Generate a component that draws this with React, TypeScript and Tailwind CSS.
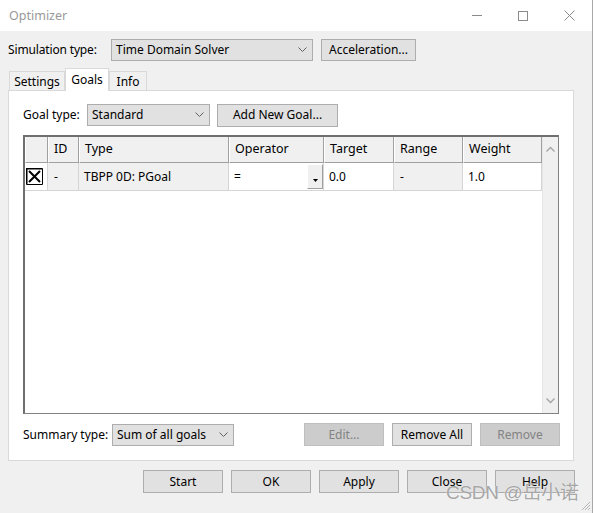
import React from "react";

const btn =
  "h-[23px] w-[80px] border border-[#adadad] bg-[#e1e1e1] flex items-center justify-center text-black";
const btnOff =
  "h-[23px] w-[80px] border border-[#bfbfbf] bg-[#cccccc] flex items-center justify-center text-[#838383]";

function Chevron() {
  return (
    <svg width="9" height="6" viewBox="0 0 9 6" className="shrink-0">
      <path d="M0.5 0.5 L4.5 4.5 L8.5 0.5" fill="none" stroke="#606060" strokeWidth="1" />
    </svg>
  );
}

function Combo({ label, width }: { label: string; width: string }) {
  return (
    <div
      className={`${width} h-[22px] border border-[#adadad] bg-[#e1e1e1] flex items-center justify-between pl-[4px] pr-[5px]`}
    >
      <span>{label}</span>
      <Chevron />
    </div>
  );
}

function CheckBox() {
  return (
    <svg width="17" height="17" viewBox="0 0 17 17">
      <rect x="0" y="0" width="17" height="17" fill="#fff" />
      <path d="M0.5 16.5 V0.5 H16.5" fill="none" stroke="#000" strokeWidth="2" />
      <path d="M16.5 0.5 V16.5 H0.5" fill="none" stroke="#000" strokeWidth="1" />
      <path d="M3 3 L14 14 M14 3 L3 14" stroke="#000" strokeWidth="2" />
    </svg>
  );
}

const headers = [
  { t: "", w: "w-[23px]" },
  { t: "ID", w: "w-[31px]" },
  { t: "Type", w: "w-[150px]" },
  { t: "Operator", w: "w-[95px]" },
  { t: "Target", w: "w-[70px]" },
  { t: "Range", w: "w-[69px]" },
  { t: "Weight", w: "w-[79px]" },
];

export default function App() {
  return (
    <div className="w-[593px] h-[513px] bg-[#f0f0f0] relative overflow-hidden font-['Noto_Sans',sans-serif] text-[12px] text-black flex flex-col border-r border-[#a8a8a8]">
      {/* title bar */}
      <div className="h-[31px] bg-white flex items-center shrink-0">
        <span className="pl-[9px] text-[#999999] text-[12.5px] pt-px">Optimizer</span>
        <div className="ml-auto flex h-full">
          <div className="w-[46px] flex items-center justify-center">
            <div className="w-[10px] h-px bg-[#8a8a8a]" />
          </div>
          <div className="w-[46px] flex items-center justify-center">
            <div className="w-[10px] h-[10px] border border-[#8a8a8a]" />
          </div>
          <div className="w-[46px] flex items-center justify-center">
            <svg width="11" height="11" viewBox="0 0 11 11">
              <path d="M0.5 0.5 L10.5 10.5 M10.5 0.5 L0.5 10.5" stroke="#8a8a8a" strokeWidth="1" />
            </svg>
          </div>
        </div>
      </div>

      {/* simulation row */}
      <div className="flex items-center mt-[8px] pl-[8px] h-[22px]">
        <span className="w-[103px] tracking-[-0.15px]">Simulation type:</span>
        <Combo label="Time Domain Solver" width="w-[202px]" />
        <div className="ml-[8px] h-[22px] w-[95px] border border-[#adadad] bg-[#e1e1e1] flex items-center justify-center">
          Acceleration...
        </div>
      </div>

      {/* tabs */}
      <div className="flex items-end pl-[9px] mt-[7px] h-[22px] relative z-10">
        <div className="w-[56px] h-[19px] border border-[#d9d9d9] border-b-0 flex items-center justify-center pt-px">
          Settings
        </div>
        <div className="w-[44px] h-[23px] border border-[#d9d9d9] border-b-0 bg-white flex items-start justify-center pt-[2px] -mb-px">
          Goals
        </div>
        <div className="w-[38px] h-[19px] border border-[#d9d9d9] border-b-0 flex items-center justify-center pt-px">
          Info
        </div>
      </div>

      {/* panel */}
      <div className="ml-[8px] w-[566px] h-[371px] bg-white border border-[#d9d9d9] flex flex-col pl-[14px]">
        <div className="flex items-center mt-[13px] h-[22px]">
          <span className="w-[64px]">Goal type:</span>
          <Combo label="Standard" width="w-[123px]" />
          <div className="ml-[7px] h-[23px] w-[121px] border border-[#adadad] bg-[#e1e1e1] flex items-center justify-center">
            Add New Goal...
          </div>
        </div>

        {/* grid */}
        <div className="mt-[9px] w-[536px] h-[279px] border border-[#828282] border-l-2 border-t-2 border-l-[#6f6f6f] border-t-[#6f6f6f] flex bg-white">
          <div className="flex flex-col">
            <div className="flex h-[26px]">
              {headers.map((h, i) => (
                <div
                  key={i}
                  className={`${h.w} h-full bg-[#f0f0f0] border-r border-b border-[#a0a0a0] border-l border-l-white flex items-center pl-[5px] text-[12.5px]`}
                >
                  {h.t}
                </div>
              ))}
            </div>
            <div className="flex h-[28px]">
              <div className="w-[23px] h-full bg-white border-r border-b border-[#d5d5d5] flex items-center pl-[1px]">
                <CheckBox />
              </div>
              <div className="w-[31px] h-full bg-[#f0f0f0] border-r border-b border-[#d5d5d5] flex items-center pl-[6px]">
                -
              </div>
              <div className="w-[150px] h-full bg-[#f0f0f0] border-r border-b border-[#d5d5d5] flex items-center pl-[5px]">
                TBPP 0D: PGoal
              </div>
              <div className="w-[95px] h-full bg-white border-r border-b border-[#d5d5d5] flex items-center pl-[5px] relative">
                =
                <div className="absolute right-0 top-[1px] w-[16px] h-[25px] bg-[#f0f0f0] border border-[#a0a0a0] border-l-white border-t-white flex items-end justify-center pb-[6px]">
                  <svg width="5" height="3" viewBox="0 0 5 3">
                    <path d="M0 0 H5 L2.5 3 Z" fill="#000" />
                  </svg>
                </div>
              </div>
              <div className="w-[70px] h-full bg-white border-r border-b border-[#d5d5d5] flex items-center pl-[5px]">
                0.0
              </div>
              <div className="w-[69px] h-full bg-[#f0f0f0] border-r border-b border-[#d5d5d5] flex items-center pl-[6px]">
                -
              </div>
              <div className="w-[79px] h-full bg-white border-r border-b border-[#d5d5d5] flex items-center pl-[5px]">
                1.0
              </div>
            </div>
          </div>
          {/* scrollbar */}
          <div className="ml-auto w-[16px] h-full bg-[#f0f0f0] flex flex-col items-center justify-between py-[9px] border-l border-[#e6e6e6]">
            <svg width="9" height="6" viewBox="0 0 9 6">
              <path d="M0.5 5.5 L4.5 1.5 L8.5 5.5" fill="none" stroke="#a3a3a3" strokeWidth="1.3" />
            </svg>
            <svg width="9" height="6" viewBox="0 0 9 6">
              <path d="M0.5 0.5 L4.5 4.5 L8.5 0.5" fill="none" stroke="#a3a3a3" strokeWidth="1.3" />
            </svg>
          </div>
        </div>

        {/* summary row */}
        <div className="flex items-center mt-[9px] h-[23px]">
          <span className="w-[89px]">Summary type:</span>
          <Combo label="Sum of all goals" width="w-[122px]" />
          <div className="ml-auto mr-[13px] flex gap-[8px]">
            <div className={btnOff}>Edit...</div>
            <div className={btn}>Remove All</div>
            <div className={btnOff}>Remove</div>
          </div>
        </div>
      </div>

      {/* bottom buttons */}
      <div className="flex gap-[8px] pl-[143px] mt-[9px]">
        <div className={btn}>Start</div>
        <div className={btn}>OK</div>
        <div className={btn}>Apply</div>
        <div className={btn}>Close</div>
        <div className={btn}>Help</div>
      </div>

      {/* resize grip */}
      <svg width="11" height="11" viewBox="0 0 11 11" className="absolute right-[1px] bottom-[2px]">
        <path d="M10 2 L2 10 M10 5 L5 10 M10 8 L8 10" stroke="#b5b5b5" strokeWidth="1" />
      </svg>

      {/* watermark */}
      <div className="absolute left-[446px] top-[481px] text-[19px] leading-[24px] text-[#8f8f8f]/80 font-['Liberation_Sans','Noto_Sans_CJK_SC',sans-serif] [text-shadow:0_0_1px_#fff] tracking-[-0.3px]">
        CSDN @岳小诺
      </div>
    </div>
  );
}
